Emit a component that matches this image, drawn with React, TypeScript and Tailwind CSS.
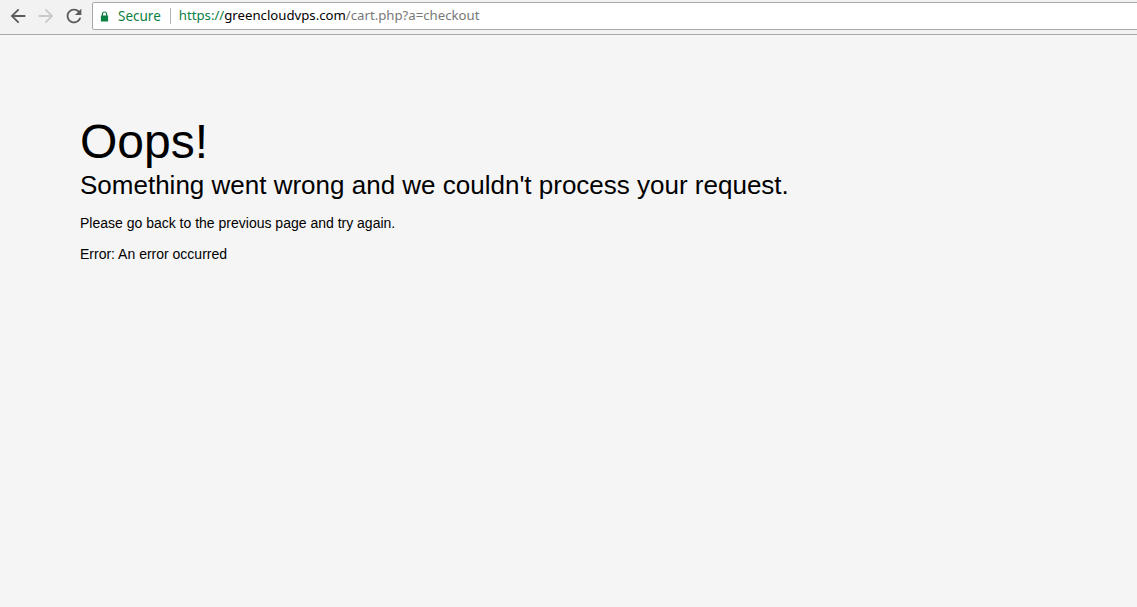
import React from "react";

function Icon({ d, className }: { d: string; className: string }) {
  return (
    <svg viewBox="0 0 24 24" className={className} fill="currentColor">
      <path d={d} />
    </svg>
  );
}

export default function App() {
  return (
    <div className="w-[1137px] h-[607px] overflow-hidden bg-[#f5f5f5] flex flex-col" style={{ fontFamily: "'Liberation Sans', Arial, sans-serif" }}>
      <div className="h-[35px] shrink-0 bg-[#f2f2f2] border-b border-[#a8a8a8] flex items-start overflow-hidden">
        <div className="flex items-center h-[31px] pl-[7px] gap-[6px]">
          <Icon className="w-[22px] h-[22px] text-[#5a5a5a]" d="M20 11H7.83l5.59-5.59L12 4l-8 8 8 8 1.41-1.41L7.83 13H20v-2z" />
          <Icon className="w-[22px] h-[22px] text-[#cacaca]" d="M12 4l-1.41 1.41L16.17 11H4v2h12.17l-5.58 5.59L12 20l8-8z" />
          <Icon className="w-[22px] h-[22px] text-[#5a5a5a]" d="M17.65 6.35C16.2 4.9 14.21 4 12 4c-4.42 0-7.99 3.58-7.99 8s3.57 8 7.99 8c3.73 0 6.84-2.55 7.73-6h-2.08c-.82 2.33-3.04 4-5.65 4-3.31 0-6-2.69-6-6s2.69-6 6-6c1.660 0 3.14.69 4.22 1.78L13 11h7V4l-2.35 2.35z" />
        </div>
        <div className="ml-[7px] mt-[2px] w-[1100px] shrink-0 h-[28px] bg-white border border-[#a9a9a9] rounded-[2px] flex items-center pl-[7px] text-[13.5px]" style={{ fontFamily: "'Noto Sans', 'Open Sans', sans-serif" }}>
          <svg viewBox="0 0 10 12" className="w-[9px] h-[11px] text-[#0b8043]" fill="currentColor">
            <path d="M2 5V3.3C2 1.6 3.3 0.4 5 0.4S8 1.6 8 3.3V5h1v6.6H1V5h1zm1.3 0h3.4V3.3C6.7 2.3 6 1.6 5 1.6S3.3 2.3 3.3 3.3V5z" />
          </svg>
          <span className="ml-[9px] text-[#0b8043]">Secure</span>
          <span className="ml-[9px] w-px h-[16px] bg-[#b5b5b5]" />
          <span className="ml-[8px] text-[13.2px]">
            <span className="text-[#0b8043]">https://</span>
            <span className="text-[#000]">greencloudvps.com</span>
            <span className="text-[#777]">/cart.php?a=checkout</span>
          </span>
        </div>
      </div>
      <div className="pl-[80px] text-black">
        <div className="mt-[83px] text-[48px] leading-[48px]">Oops!</div>
        <div className="mt-[6px] text-[26px] leading-[26px]">Something went wrong and we couldn't process your request.</div>
        <div className="mt-[15px] text-[14px] leading-[20px]">Please go back to the previous page and try again.</div>
        <div className="mt-[11px] text-[14px] leading-[20px]">Error: An error occurred</div>
      </div>
    </div>
  );
}
